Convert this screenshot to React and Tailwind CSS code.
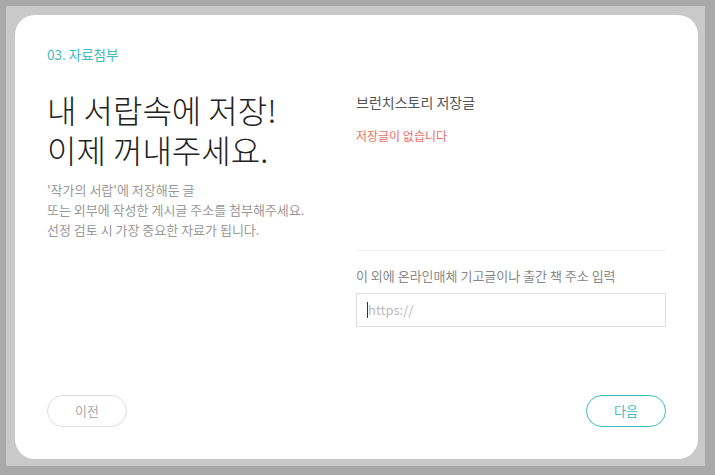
export default function App() {
  const sans = { fontFamily: '"Noto Sans CJK KR", "Noto Sans", sans-serif' };
  return (
    <div className="w-[715px] h-[475px] bg-[#a9a9a9] pt-[6px] pl-[6px] pr-[10px] pb-[9px]" style={sans}>
      <div className="w-full h-full bg-[#c9c9c9] pt-[9px] pl-[9px] pr-[7px] pb-[7px]">
        <div className="w-full h-full bg-white rounded-[20px] px-[32px] pt-[29px] pb-[32px] flex flex-col">
          <div className="text-[13.5px] leading-[20px] text-[#3fbcbc]">03. 자료첨부</div>
          <div className="flex flex-1 mt-[25px]">
            <div className="w-[309px]">
              <h1 className="text-[32px] leading-[40px] font-light text-[#222]">
                <div>내 서랍속에 저장!</div>
                <div>이제 꺼내주세요.</div>
              </h1>
              <p className="mt-[11px] text-[13px] leading-[20px] text-[#999]">
                '작가의 서랍'에 저장해둔 글
                <br />
                또는 외부에 작성한 게시글 주소를 첨부해주세요.
                <br />
                선정 검토 시 가장 중요한 자료가 됩니다.
              </p>
            </div>
            <div className="flex-1 flex flex-col">
              <div className="text-[14px] leading-[20px] text-[#555] mt-[3px]">브런치스토리 저장글</div>
              <div className="text-[12px] leading-[20px] text-[#eb6f62] mt-[14px]">저장글이 없습니다</div>
              <div className="h-px bg-[#f0f0f0] mt-[104px]" />
              <div className="text-[13px] leading-[20px] text-[#888] mt-[15px]">이 외에 온라인매체 기고글이나 출간 책 주소 입력</div>
              <div className="mt-[7px] h-[34px] border border-[#dedede] flex items-center pl-[10px]">
                <span className="w-px h-[16px] bg-[#333]" />
                <span className="text-[13px] text-[#bbb]">https://</span>
              </div>
            </div>
          </div>
          <div className="flex justify-between">
            <button className="w-[80px] h-[32px] rounded-full border border-[#ddd] text-[13px] text-[#aaa]">이전</button>
            <button className="w-[80px] h-[32px] rounded-full border border-[#3fbcbc] text-[13px] text-[#3fbcbc]">다음</button>
          </div>
        </div>
      </div>
    </div>
  );
}
